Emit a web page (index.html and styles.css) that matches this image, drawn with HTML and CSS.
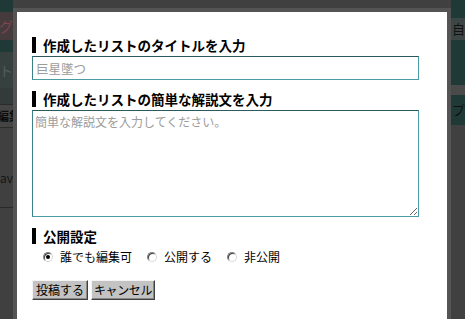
FILE: index.html
```html
<!DOCTYPE html>
<html lang="ja">
<head>
<meta charset="utf-8">
<title>リスト作成</title>
<link rel="stylesheet" href="styles.css">
</head>
<body>
<div class="bg">
  <div class="col col-left">
    <div class="blk teal h12"></div>
    <div class="blk band-red h28"><span>ブログ</span></div>
    <div class="blk teal h12"></div>
    <div class="blk band-gray h36"><span>リスト</span></div>
    <div class="blk dark h16"></div>
    <div class="blk btn-edit h24"><span class="left">編集</span></div>
    <div class="blk grey h80"><span class="av">av</span></div>
    <div class="blk grey rest"></div>
  </div>
  <div class="col col-right">
    <div class="blk teal h18"></div>
    <div class="blk band-r h22"><span class="left ink">自し</span></div>
    <div class="blk teal h45"></div>
    <div class="blk mid h10"></div>
    <div class="blk teal h30"><span class="left ink">プ</span></div>
    <div class="blk grey rest"></div>
  </div>
</div>

<div class="modal">
  <h2 class="label">作成したリストのタイトルを入力</h2>
  <input class="field" type="text" placeholder="巨星墜つ">
  <h2 class="label">作成したリストの簡単な解説文を入力</h2>
  <textarea class="area" placeholder="簡単な解説文を入力してください。"></textarea>
  <h2 class="label">公開設定</h2>
  <div class="radios">
    <label class="opt"><span class="radio on"></span>誰でも編集可</label>
    <label class="opt"><span class="radio"></span>公開する</label>
    <label class="opt"><span class="radio"></span>非公開</label>
  </div>
  <div class="buttons">
    <button class="btn" type="button">投稿する</button>
    <button class="btn" type="button">キャンセル</button>
  </div>
</div>
</body>
</html>
```
FILE: styles.css
```css
html, body {
  margin: 0;
  padding: 0;
}
body {
  width: 465px;
  height: 319px;
  overflow: hidden;
  background: #404040;
  font-family: "Noto Sans CJK JP", "Noto Sans", sans-serif;
  position: relative;
}
.bg {
  display: flex;
  justify-content: space-between;
  height: 319px;
}
.col {
  display: flex;
  flex-direction: column;
}
.col-left { width: 13px; }
.col-right { width: 14px; }
.blk {
  display: flex;
  align-items: center;
  justify-content: flex-end;
  overflow: hidden;
  white-space: nowrap;
  font-size: 14px;
  line-height: 14px;
}
.blk .left { margin-left: 1px; }
.blk:has(.left) { justify-content: flex-start; }
.h10 { height: 10px; }
.h12 { height: 12px; }
.h16 { height: 16px; }
.h18 { height: 18px; }
.h22 { height: 22px; }
.h24 { height: 24px; }
.h28 { height: 28px; }
.h30 { height: 30px; }
.h36 { height: 36px; }
.h45 { height: 45px; }
.h80 { height: 80px; }
.rest { flex: 1; }
.teal { background: #1f3936; }
.band-red { background: #453a3c; color: #7e4450; }
.band-gray { background: #36413f; color: #525d5b; }
.band-r { background: #3c4745; }
.dark { background: #343a39; }
.mid { background: #4a4a4a; }
.grey { background: #404040; }
.ink { color: #111; font-size: 13px; }
.btn-edit {
  background: #454545;
  border-top: 1px solid #2b2b2b;
  border-bottom: 1px solid #2b2b2b;
  box-sizing: border-box;
  font-size: 12px;
  color: #0c0c0c;
  font-weight: bold;
}
.btn-edit .left { margin-left: -3px; }
.grey .av {
  font-size: 12px;
  color: #151515;
  margin-bottom: -20px;
}
.h80 { border-bottom: 1px solid #2a2a2a; box-sizing: border-box; }

.modal {
  position: absolute;
  top: 8px;
  left: 13px;
  width: 438px;
  height: 311px;
  box-sizing: border-box;
  border: 4px solid #545454;
  border-bottom: 0;
  background: #fff;
  padding: 25px 28px 0 15px;
  overflow: hidden;
}
.label {
  margin: 0 0 3px;
  border-left: 4px solid #000;
  padding-left: 7px;
  font-size: 13.5px;
  line-height: 16px;
  height: 16px;
  font-weight: bold;
  color: #000;
}
.field, .area {
  display: block;
  width: 100%;
  box-sizing: border-box;
  border: 1px solid #4a9da5;
  border-top-color: #2d5a5f;
  border-left-color: #3b8189;
  font-family: "Noto Sans CJK JP", sans-serif;
  font-size: 12.5px;
  color: #000;
  outline: none;
  margin: 0 0 11px;
  background: #fff;
}
.field {
  height: 24px;
  padding: 0 3px;
}
.area {
  height: 107px;
  padding: 3px 2px;
  line-height: 15px;
  font-size: 12px;
  resize: vertical;
}
.field::placeholder, .area::placeholder {
  color: #9c9c9c;
}
.radios {
  display: flex;
  align-items: center;
  gap: 15px;
  margin: 5px 0 0 11px;
  height: 16px;
  font-size: 12px;
  line-height: 16px;
}
.opt {
  display: flex;
  align-items: center;
  gap: 7px;
}
.radio {
  width: 10px;
  height: 10px;
  box-sizing: border-box;
  border-radius: 50%;
  border: 1px solid;
  border-color: #808080 #d8d8d8 #d8d8d8 #808080;
  box-shadow: inset 1px 1px 0 #404040;
  background: #fff;
  display: flex;
  align-items: center;
  justify-content: center;
}
.radio.on::after {
  content: "";
  width: 4px;
  height: 4px;
  border-radius: 50%;
  background: #000;
}
.buttons {
  display: flex;
  gap: 3px;
  margin-top: 15px;
}
.btn {
  height: 20px;
  box-sizing: border-box;
  padding: 0 3px;
  background: #c3c3c3;
  border: 1px solid;
  border-color: #f4f4f4 #404040 #404040 #f4f4f4;
  box-shadow: inset -1px -1px 0 #888;
  font-family: "Noto Sans CJK JP", sans-serif;
  font-size: 12px;
  line-height: 16px;
  color: #000;
}
.btn + .btn { padding: 0 2px; letter-spacing: -0.4px; }
```
